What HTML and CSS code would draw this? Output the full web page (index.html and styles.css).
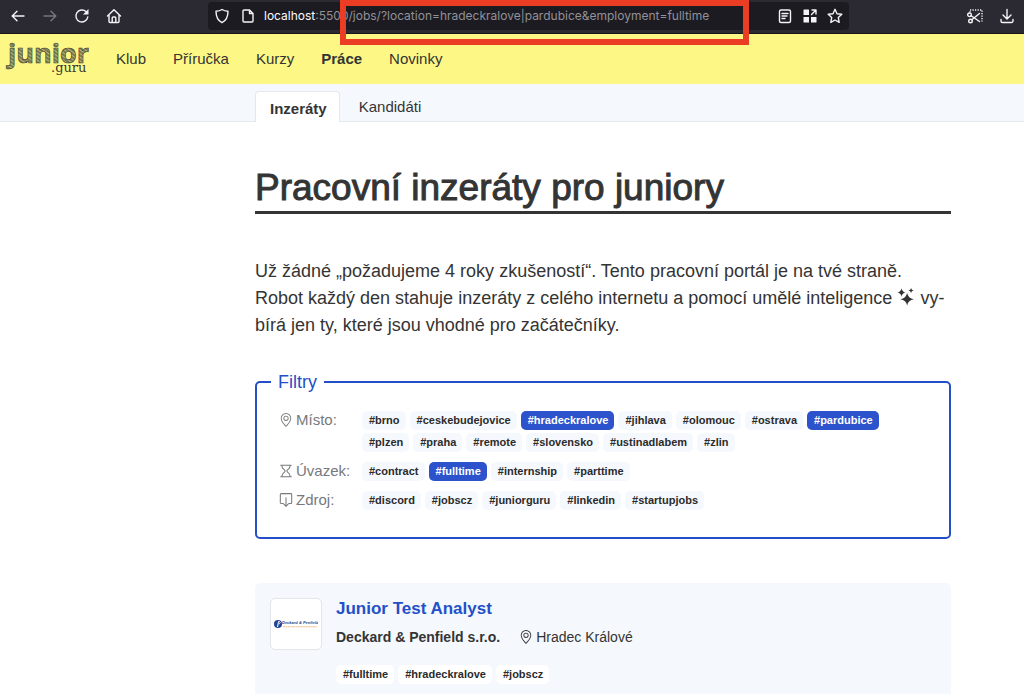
FILE: index.html
```html
<!DOCTYPE html>
<html lang="cs">
<head>
<meta charset="utf-8">
<meta name="viewport" content="width=device-width, initial-scale=1">
<title>Pracovní inzeráty pro juniory</title>
<link rel="stylesheet" href="styles.css">
</head>
<body>
<svg class="sprite" aria-hidden="true">
  <symbol id="pin" viewBox="0 0 16 16"><path d="M12.2 8.9c-.5 1.1-1.200 2.200-2 3.200A32 32 0 0 1 8 14.600a32 32 0 0 1-2.200-2.500c-.8-1-1.500-2.100-2-3.200C3.300 7.900 3 6.900 3 6a5 5 0 0 1 10 0c0 .9-.3 1.900-.8 2.900zM8 16s6-5.700 6-10A6 6 0 0 0 2 6c0 4.300 6 10 6 10z"/><path d="M8 8a2 2 0 1 1 0-4 2 2 0 0 1 0 4zm0 1a3 3 0 1 0 0-6 3 3 0 0 0 0 6z"/></symbol>
  <symbol id="hourglass" viewBox="0 0 16 16"><path d="M1.500 1.500h13M1.500 14.500h13M3.500 1.500v1.500c0 2.500 3.500 3.500 3.500 5s-3.500 2.500-3.500 5v1.500M12.500 1.500v1.500c0 2.500-3.500 3.500-3.500 5s3.500 2.500 3.500 5v1.500" fill="none" stroke="currentColor" stroke-width="1.200"/></symbol>
  <symbol id="download" viewBox="0 0 16 16"><path d="M5 12H2.500a1 1 0 0 1-1-1V1.700a1 1 0 0 1 1-1h11a1 1 0 0 1 1 1V11a1 1 0 0 1-1 1H11M8 5v10M5 12.200l3 3 3-3" fill="none" stroke="currentColor" stroke-width="1.200"/></symbol>
</svg>

<div class="browser">
  <div class="nav-buttons">
    <button aria-label="Zpět"><svg viewBox="0 0 16 16"><path d="M14 8H2.500M7 3.200L2.200 8 7 12.800"/></svg></button>
    <button class="dim" aria-label="Vpřed"><svg viewBox="0 0 16 16"><path d="M2 8h11.500M9 3.200L13.800 8 9 12.800"/></svg></button>
    <button aria-label="Obnovit"><svg viewBox="0 0 16 16"><path d="M13.800 9A6 6 0 1 1 12 3.600"/><path class="solid" d="M14.500 1v5.500H9z"/></svg></button>
    <button aria-label="Domů"><svg viewBox="0 0 16 16"><path d="M1.500 8L8 1.700 14.500 8M3 7v6.500a1 1 0 0 0 1 1h8a1 1 0 0 0 1-1V7M6.200 14.500V10a1 1 0 0 1 1-1h1.600a1 1 0 0 1 1 1v4.500"/></svg></button>
  </div>
  <div class="address">
    <svg viewBox="0 0 16 16"><path d="M8 1.500c2 1.300 4 1.700 6 1.800 0 5-1 9-6 11.400C3 12.300 2 8.300 2 3.300c2-.1 4-.5 6-1.800z"/></svg>
    <svg class="page-icon" viewBox="0 0 16 16"><path d="M9.500 2H4a1 1 0 0 0-1 1v10a1 1 0 0 0 1 1h8a1 1 0 0 0 1-1V5.500zM9.500 2v3.500H13"/></svg>
    <label class="host" for="url">localhost</label>
    <input class="url" id="url" type="text" value=":5500/jobs/?location=hradeckralove|pardubice&amp;employment=fulltime">
    <div class="address-actions">
      <button aria-label="Režim čtení"><svg viewBox="0 0 16 16"><rect x="2.500" y="2" width="11" height="12.500" rx="1.500"/><path d="M5 5.500h6M5 8h5M5 10.500h3"/></svg></button>
      <button aria-label="Rozšíření"><svg viewBox="0 0 16 16"><path class="solid" d="M2 1.500h4.500a.5.5 0 0 1 .5.500v5H1.500V2a.5.5 0 0 1 .5-.5zM1.500 9H7v5.500H2a.5.5 0 0 1-.5-.5zM9 9h5.500v5a.5.5 0 0 1-.5.500H9z"/><path d="M9.500 6.500l4-4M10 2h4v4"/></svg></button>
      <button aria-label="Přidat záložku"><svg viewBox="0 0 16 16"><path d="M8 1.300l2 4.400 4.800.6-3.500 3.300.9 4.800L8 12l-4.200 2.400.9-4.800L1.200 6.300 6 5.700z"/></svg></button>
    </div>
  </div>
  <div class="tools">
    <button aria-label="Výstřižek"><svg viewBox="0 0 16 16"><path class="dashes" d="M3 4.500V2h12v11.500"/><circle cx="2.500" cy="6.800" r="1.800"/><circle cx="3.500" cy="13" r="1.800"/><path d="M4.200 7.700l8.300 5.800M4.800 11.700l7.700-6.200"/></svg></button>
    <button aria-label="Stažené soubory"><svg viewBox="0 0 16 16"><path d="M8 1.500v9M4 7l4 4 4-4M2 11.500v1.500a1.500 1.500 0 0 0 1.500 1.500h9A1.500 1.500 0 0 0 14 13v-1.500"/></svg></button>
  </div>
  <div class="marker"></div>
</div>

<header class="site-header">
  <a class="logo" href="#" aria-label="junior.guru">
    <svg viewBox="0 0 84 40">
      <defs><pattern id="hatch" width="2" height="3" patternUnits="userSpaceOnUse" patternTransform="rotate(35)"><rect width="2" height="3" fill="#bdb96c"/><path d="M0 1h2" stroke="#383836"/></pattern></defs>
      <text class="logo-main" x="2" y="24">junior</text>
      <text class="logo-sub" x="45" y="33">.guru</text>
    </svg>
  </a>
  <nav class="menu">
    <a href="#">Klub</a>
    <a href="#">Příručka</a>
    <a href="#">Kurzy</a>
    <a class="active" href="#">Práce</a>
    <a href="#">Novinky</a>
  </nav>
</header>

<nav class="tabs">
  <a class="active" href="#">Inzeráty</a>
  <a href="#">Kandidáti</a>
</nav>

<main class="content">
  <h1>Pracovní inzeráty pro juniory</h1>
  <p class="lead">Už žádné „požadujeme 4 roky zkušeností“. Tento pracovní portál je na tvé straně. Robot každý den stahuje inzeráty z celého internetu a pomocí umělé inteligence <svg class="stars" viewBox="0 0 16 16" aria-hidden="true"><path d="M9 4.500Q9.900 9.100 15 10 9.900 10.900 9 15.500 8.100 10.900 3 10 8.100 9.100 9 4.500zM4 .3Q4.500 3.400 7.500 4 4.500 4.600 4 7.700 3.500 4.600.5 4 3.500 3.400 4 .3zM12.500 0Q12.800 1.900 14.800 2.200 12.800 2.500 12.500 4.400 12.200 2.500 10.200 2.200 12.200 1.900 12.500 0z"/></svg> vy&shy;bírá jen ty, které jsou vhodné pro začátečníky.</p>

  <fieldset class="filters">
    <legend>Filtry</legend>
    <div class="filter">
      <span class="filter-name"><svg><use href="#pin"/></svg>Místo:</span>
      <div class="tags">
        <a href="#">#brno</a><a href="#">#ceskebudejovice</a><a class="selected" href="#">#hradeckralove</a><a href="#">#jihlava</a><a href="#">#olomouc</a><a href="#">#ostrava</a><a class="selected" href="#">#pardubice</a><a href="#">#plzen</a><a href="#">#praha</a><a href="#">#remote</a><a href="#">#slovensko</a><a href="#">#ustinadlabem</a><a href="#">#zlin</a>
      </div>
    </div>
    <div class="filter">
      <span class="filter-name"><svg><use href="#hourglass"/></svg>Úvazek:</span>
      <div class="tags">
        <a href="#">#contract</a><a class="selected" href="#">#fulltime</a><a href="#">#internship</a><a href="#">#parttime</a>
      </div>
    </div>
    <div class="filter">
      <span class="filter-name"><svg><use href="#download"/></svg>Zdroj:</span>
      <div class="tags">
        <a href="#">#discord</a><a href="#">#jobscz</a><a href="#">#juniorguru</a><a href="#">#linkedin</a><a href="#">#startupjobs</a>
      </div>
    </div>
  </fieldset>

  <article class="job">
    <div class="company-logo">
      <svg viewBox="0 0 44 12" role="img" aria-label="Deckard &amp; Penfield">
        <circle cx="4" cy="6" r="4" fill="#1e458f"/><path d="M3.500 9l1-5.500c2-.5 2.500 2 .2 2.500" fill="none" stroke="#fff"/>
        <text class="brand" x="8" y="6">Deckard &amp; Penfield</text>
        <path d="M9 8.800h34" stroke="#efbd83" stroke-dasharray="2 .5"/>
      </svg>
    </div>
    <div class="job-body">
      <h2><a href="#">Junior Test Analyst</a></h2>
      <p class="job-meta"><strong>Deckard &amp; Penfield s.r.o.</strong><span class="place"><svg><use href="#pin"/></svg>Hradec Králové</span></p>
      <div class="tags">
        <a href="#">#fulltime</a><a href="#">#hradeckralove</a><a href="#">#jobscz</a>
      </div>
    </div>
  </article>
</main>
</body>
</html>
```
FILE: styles.css
```css
* { box-sizing: border-box; }

body {
  margin: 0;
  background: #fff;
  color: #343434;
  font-family: "Liberation Sans", Arial, sans-serif;
  font-size: 15px;
  line-height: 20px;
  overflow-x: hidden;
}

a { color: inherit; text-decoration: none; }
.sprite { display: none; }

/* Browser toolbar */
.browser {
  position: relative;
  display: flex;
  align-items: center;
  height: 34px;
  padding: 0 9px 2px 10px;
  background: #2b2a33;
  border-bottom: 1px solid #17161b;
}
.browser button {
  display: flex;
  padding: 0;
  border: 0;
  background: none;
  color: inherit;
}
.browser svg {
  flex: none;
  width: 16px;
  height: 16px;
  fill: none;
  stroke: currentColor;
  stroke-width: 1.4;
  stroke-linecap: round;
  stroke-linejoin: round;
}
.browser .solid { fill: currentColor; stroke: none; }
.browser .dashes { stroke-dasharray: 1.2 1.3; stroke-linecap: butt; }
.browser, .address { color: #f4f4f6; }
.nav-buttons { display: flex; gap: 16px; width: 198px; }
.browser .dim { color: #77767d; }
.address {
  display: flex;
  align-items: center;
  flex: 0 1 641px;
  min-width: 0;
  height: 28px;
  padding: 0 6px;
  border-radius: 4px;
  background: #1c1b22;
  font: 12px/16px Inter, sans-serif;
}
.address .page-icon { margin: 0 8px 0 10px; }
.host { color: #fbfbfe; }
.url {
  flex: 1;
  min-width: 0;
  padding: 0;
  border: 0;
  outline: 0;
  background: none;
  color: #929197;
  font: inherit;
}
.address-actions { display: flex; gap: 9px; }
.tools { display: flex; gap: 16px; margin-left: auto; }
.marker {
  position: absolute;
  top: 0;
  left: 340px;
  width: 409px;
  height: 45px;
  border: 6px solid #ea3d23;
  pointer-events: none;
}

/* Site header */
.site-header {
  display: flex;
  align-items: center;
  height: 50px;
  padding-left: 6px;
  background: #fdf885;
}
.logo { display: flex; }
.logo svg { width: 84px; height: 40px; overflow: visible; }
.logo-main {
  font: 700 27px "Open Sans", sans-serif;
  fill: url(#hatch);
  stroke: #383836;
  stroke-width: .6;
}
.logo-sub { font: 13px "DejaVu Serif", serif; fill: #383836; }
.menu { display: flex; gap: 27px; padding-left: 26px; }
.menu .active { font-weight: 700; }

.tabs {
  display: flex;
  align-items: flex-end;
  height: 38px;
  padding-left: 255px;
  background: #f5f8fd;
  box-shadow: inset 0 -1px #e5e8eb;
}
.tabs a { padding: 6px 19px 5px; }
.tabs .active {
  padding: 7px 12px 3px 14px;
  border: 1px solid #e5e8eb;
  border-bottom: 0;
  border-radius: 4px 4px 0 0;
  background: #fff;
  font-weight: 700;
}

/* Page content */
.content { padding: 43px 73px 0 255px; }
h1 {
  margin: 0 0 44px;
  border-bottom: 3px solid #343434;
  font-size: 37px;
  font-weight: 400;
  line-height: 46px;
  -webkit-text-stroke: 1px #343434;
}
.lead { margin: 0 0 33px; font-size: 18px; line-height: 27px; }
.stars { width: 18px; height: 18px; fill: #343434; vertical-align: -2px; }

.filters {
  min-width: 0;
  margin: 0 0 44px;
  padding: 19px 22px 17px;
  border: 2px solid #2350c8;
  border-radius: 5px;
}
.filters legend {
  margin-left: -8px;
  padding: 0 7px;
  color: #2350c8;
  font-size: 18px;
  line-height: 20px;
}
.filter { display: flex; margin-bottom: 10px; }
.filter-name {
  display: flex;
  flex: none;
  gap: 3px;
  width: 83px;
  height: 18px;
  align-items: center;
  color: #77797c;
}
.filter-name svg, .place svg { width: 14px; height: 14px; fill: currentColor; }

.tags { display: flex; flex-wrap: wrap; gap: 3px 4px; }
.tags a {
  padding: 0 6px 0 7px;
  border-radius: 5px;
  background: #f5f8fd;
  color: #2b2b2b;
  font-size: 11px;
  font-weight: 700;
  line-height: 19px;
}
.tags .selected { background: #2c52cc; color: #fff; }

.job {
  display: flex;
  gap: 14px;
  padding: 15px;
  border-radius: 5px;
  background: #f5f8fd;
}
.company-logo {
  display: flex;
  align-items: center;
  justify-content: center;
  flex: none;
  width: 52px;
  height: 52px;
  border: 1px solid #e3e6ea;
  border-radius: 5px;
  background: #fff;
}
.company-logo svg { width: 44px; height: 12px; }
.brand { font: italic 700 4px "Liberation Sans", sans-serif; fill: #1e458f; }
.job h2 {
  margin: 0 0 7px;
  color: #2350c8;
  font-size: 17px;
  font-weight: 700;
  line-height: 22px;
}
.job-meta { display: flex; gap: 19px; margin: 0 0 18px; font-size: 14px; }
.place { display: flex; align-items: center; gap: 3px; }
.job .tags a { background: #fff; }
```
